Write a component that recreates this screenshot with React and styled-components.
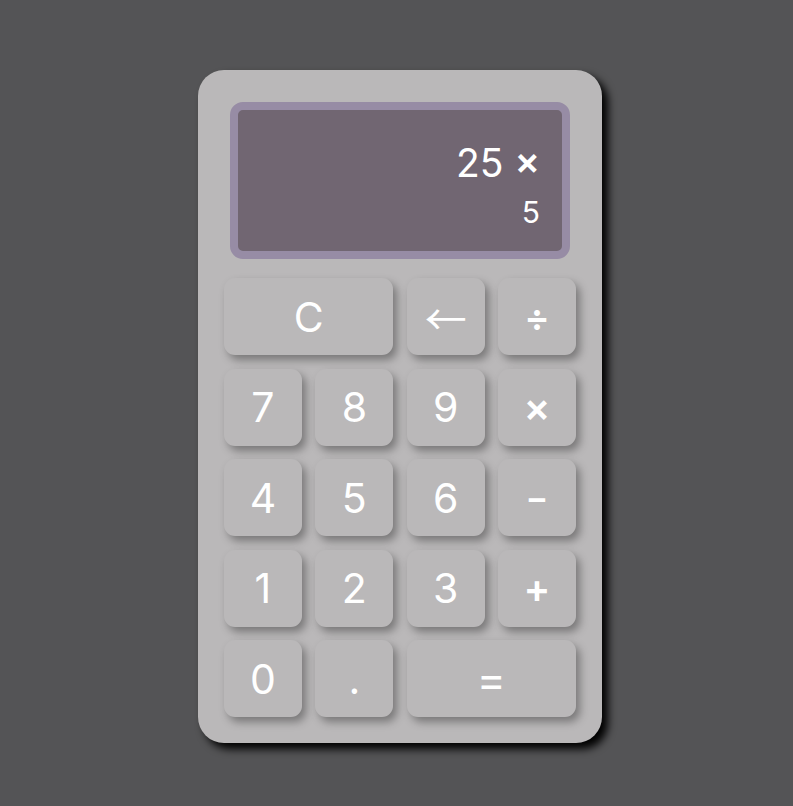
import styled, { createGlobalStyle } from "styled-components";

const GlobalStyle = createGlobalStyle`
  html, body {
    margin: 0;
    padding: 0;
    background: #545456;
  }
  body {
    font-family: 'Inter', 'Open Sans', sans-serif;
  }
`;

const Page = styled.div`
  width: 793px;
  height: 806px;
  display: flex;
  justify-content: center;
  padding-top: 70px;
  box-sizing: border-box;
`;

const Body = styled.div`
  width: 404px;
  height: 673px;
  box-sizing: border-box;
  background: #bab8b9;
  border-radius: 26px;
  box-shadow: 6px 6px 8px #000;
  padding: 32px 26px 26px;
  display: flex;
  flex-direction: column;
  margin-left: 7px;
`;

const Screen = styled.div`
  margin: 0 6px;
  height: 157px;
  box-sizing: border-box;
  border: 8px solid #978ca5;
  border-radius: 13px;
  background: #716672;
  display: flex;
  flex-direction: column;
  align-items: flex-end;
  padding: 30px 22px 0;
  color: #fff;
`;

const Previous = styled.div`
  font-size: 39px;
  line-height: 46px;
  font-weight: 400;

  span {
    font-weight: 600;
    font-size: 38px;
    position: relative;
    top: -3px;
  }
`;

const Current = styled.div`
  font-size: 30px;
  line-height: 40px;
  margin-top: 6px;
  font-weight: 400;
`;

const Keys = styled.div`
  margin-top: 19px;
  display: grid;
  grid-template-columns: repeat(4, 1fr);
  grid-auto-rows: 77px;
  gap: 13.5px;
`;

const Key = styled.button`
  grid-column: span ${(p) => p.$span || 1};
  border: none;
  border-radius: 11px;
  background: #bab8b9;
  color: #fff;
  font-family: ${(p) =>
    p.$arrow ? "'Noto Sans CJK SC', 'DejaVu Sans', sans-serif" : "'Inter', 'Open Sans', sans-serif"};
  font-size: ${(p) => p.$size || 41}px;
  font-weight: ${(p) => (p.$op ? 600 : 400)};
  display: flex;
  align-items: center;
  justify-content: center;
  padding: 0;
  box-shadow: 4px 5px 8px rgba(0, 0, 0, 0.35);
  cursor: pointer;
`;

const keys = [
  { label: "C", span: 2 },
  { label: "←", size: 42, arrow: true },
  { label: "÷", size: 38, op: true },
  { label: "7" },
  { label: "8" },
  { label: "9" },
  { label: "×", size: 40, op: true },
  { label: "4" },
  { label: "5" },
  { label: "6" },
  { label: "−", size: 34, op: true },
  { label: "1" },
  { label: "2" },
  { label: "3" },
  { label: "+", size: 40, op: true },
  { label: "0" },
  { label: "." },
  { label: "=", span: 2, size: 44 },
];

const App = () => {
  return (
    <Page>
      <GlobalStyle />
      <Body>
        <Screen>
          <Previous>
            25 <span>×</span>
          </Previous>
          <Current>5</Current>
        </Screen>
        <Keys>
          {keys.map((k) => (
            <Key key={k.label} $span={k.span} $size={k.size} $op={k.op} $arrow={k.arrow}>
              {k.label}
            </Key>
          ))}
        </Keys>
      </Body>
    </Page>
  );
};

export default App;
